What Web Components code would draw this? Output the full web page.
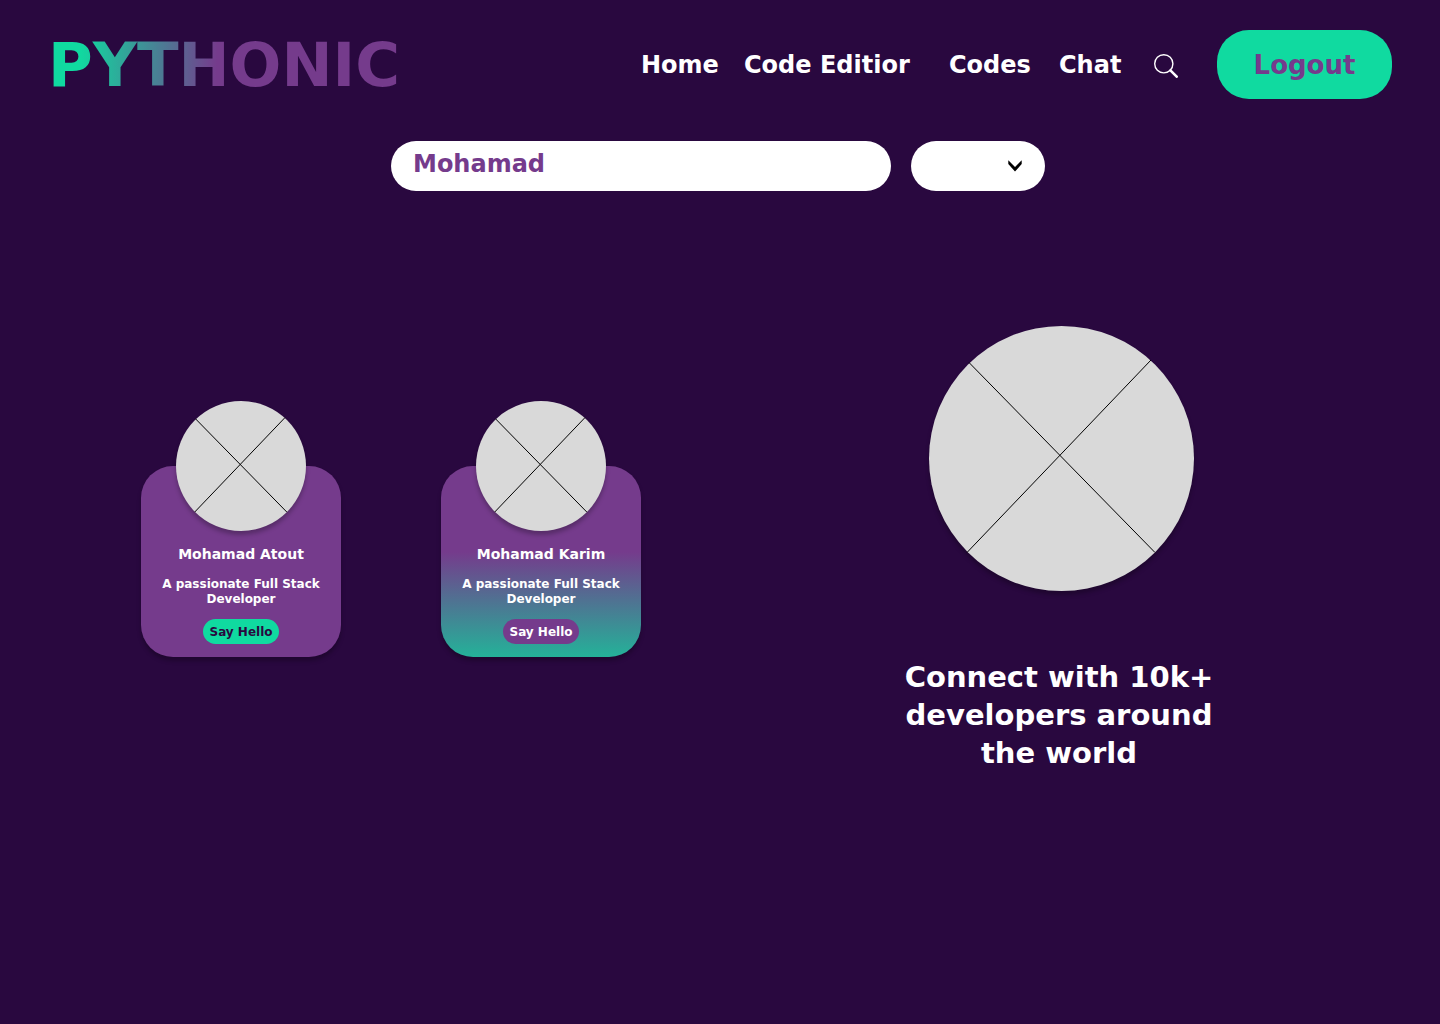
<!DOCTYPE html>
<html lang="en">
<head>
<meta charset="utf-8">
<meta name="viewport" content="width=device-width, initial-scale=1">
<title>Pythonic</title>
<style>
  :root {
    --bg: #29083f;
    --purple: #753b8c;
    --green: #10daa0;
    --grey: #d9d9d9;
    --shadow: 0 4px 4px rgba(0, 0, 0, .25);
  }
  body {
    margin: 0;
    min-height: 100vh;
    background: var(--bg);
    color: #fff;
    font-family: "DejaVu Sans", Verdana, sans-serif;
    font-weight: 700;
  }
</style>
</head>
<body>
<pythonic-page></pythonic-page>

<script>
const define = (name, html) => {
  const template = document.createElement('template');
  template.innerHTML = html;
  customElements.define(name, class extends HTMLElement {
    constructor() {
      super();
      this.attachShadow({ mode: 'open' }).append(template.content.cloneNode(true));
    }
  });
};

define('brand-logo', `
  <style>
    :host { display: block; font-size: 61px; line-height: 68px; }
    a {
      display: block;
      color: transparent;
      text-decoration: none;
      background: linear-gradient(92deg, var(--green) 9%, var(--purple) 48%);
      background-clip: text;
      -webkit-background-clip: text;
    }
  </style>
  <a href="#"><slot></slot></a>
`);

define('search-icon', `
  <style>:host { display: block; width: 24px; padding-top: 2px; } svg { display: block; }</style>
  <svg width="24" height="24" viewBox="0 0 24 24" fill="none" stroke="#fff" aria-hidden="true">
    <circle cx="9.8" cy="9.8" r="9.1" stroke-width="1.4"/>
    <path d="M16.4 16.4 L22.7 22.7" stroke-width="2.6" stroke-linecap="round"/>
  </svg>
`);

define('site-header', `
  <style>
    :host { display: block; }
    header {
      display: flex;
      justify-content: space-between;
      align-items: center;
      padding: 30px 48px 0;
    }
    nav {
      display: grid;
      grid-template-columns: 103px 205px 110px 95px 63px 175px;
      align-items: center;
      font-size: 24px;
      line-height: 30px;
    }
    nav a { color: #fff; text-decoration: none; white-space: nowrap; }
    button {
      height: 69px;
      border: 0;
      border-radius: 32px;
      background: var(--green);
      color: var(--purple);
      font: inherit;
      font-size: 26px;
    }
  </style>
  <header>
    <brand-logo>PYTHONIC</brand-logo>
    <nav aria-label="Main">
      <a href="#">Home</a>
      <a href="#">Code Editior</a>
      <a href="#">Codes</a>
      <a href="#">Chat</a>
      <a href="#" aria-label="Search"><search-icon></search-icon></a>
      <button type="button">Logout</button>
    </nav>
  </header>
`);

define('search-bar', `
  <style>
    :host { display: block; }
    form {
      display: flex;
      justify-content: center;
      gap: 20px;
      padding: 42px 24px 0 20px;
    }
    input, select {
      box-sizing: border-box;
      height: 50px;
      margin: 0;
      border: 0;
      border-radius: 25px;
      background: #fff;
      color: var(--purple);
      font: inherit;
      font-size: 24px;
    }
    input { flex: 0 1 500px; min-width: 0; padding: 0 22px 4px; }
    .filter { display: grid; grid-template-columns: 134px; align-items: center; }
    .filter > * { grid-area: 1 / 1; }
    select { appearance: none; width: 100%; padding: 0 40px 0 22px; }
    svg { justify-self: end; margin-right: 23px; pointer-events: none; }
  </style>
  <form>
    <input type="text" value="Mohamad" aria-label="Search developers">
    <div class="filter">
      <select aria-label="Filter"><option></option></select>
      <svg width="14" height="12" viewBox="0 0 14 12" aria-hidden="true">
        <path d="M0.3 0.3 L7 7 L13.7 0.3 V4 L7 11.6 L0.3 4 Z"/>
      </svg>
    </div>
  </form>
`);

define('user-avatar', `
  <style>
    :host {
      display: block;
      aspect-ratio: 1;
      border-radius: 50%;
      background: var(--grey);
      box-shadow: var(--shadow);
    }
    svg { display: block; width: 100%; height: 100%; }
    path { vector-effect: non-scaling-stroke; }
  </style>
  <svg viewBox="0 0 265 265" fill="none" stroke="#000" aria-hidden="true">
    <path d="M40 36.500 L226 226.500 M222 34 L38 226.500"/>
  </svg>
`);

define('developer-card', `
  <style>
    :host { display: block; width: 200px; padding-top: 65px; }
    article {
      display: flex;
      flex-direction: column;
      align-items: center;
      padding: 0 16px 13px;
      border-radius: 32px;
      background: var(--purple);
      box-shadow: var(--shadow);
      text-align: center;
    }
    :host([featured]) article {
      background: linear-gradient(var(--purple) 45%, #24b299);
    }
    user-avatar { width: 130px; margin-top: -65px; }
    h2 { margin: 14px 0; font-size: 14px; line-height: 18px; white-space: nowrap; }
    p { margin: 0 0 12px; font-size: 12px; line-height: 15px; }
    button {
      height: 25px;
      width: 76px;
      padding: 0;
      border: 0;
      border-radius: 13px;
      background: var(--green);
      color: var(--bg);
      font: inherit;
      font-size: 12px;
    }
    :host([featured]) button { background: var(--purple); color: #fff; }
  </style>
  <article>
    <user-avatar></user-avatar>
    <h2><slot name="name"></slot></h2>
    <p><slot></slot></p>
    <button type="button">Say Hello</button>
  </article>
`);

define('connect-banner', `
  <style>
    :host { display: block; width: 362px; }
    section { display: flex; flex-direction: column; align-items: center; gap: 67px; }
    user-avatar { width: 265px; }
    h1 {
      margin: 0;
      padding: 0 14px 0 10px;
      font-size: 29px;
      line-height: 38px;
      text-align: center;
    }
  </style>
  <section>
    <user-avatar></user-avatar>
    <h1><slot></slot></h1>
  </section>
`);

define('pythonic-page', `
  <style>
    :host { display: block; }
    main {
      display: flex;
      justify-content: space-between;
      align-items: flex-start;
      padding: 135px 198px 60px 141px;
    }
    .cards { display: flex; gap: 100px; padding-top: 75px; }
  </style>
  <site-header></site-header>
  <search-bar></search-bar>
  <main>
    <div class="cards">
      <developer-card>
        <span slot="name">Mohamad Atout</span>
        A passionate Full Stack Developer
      </developer-card>
      <developer-card featured>
        <span slot="name">Mohamad Karim</span>
        A passionate Full Stack Developer
      </developer-card>
    </div>
    <connect-banner>Connect with 10k+ developers around the world</connect-banner>
  </main>
`);
</script>
</body>
</html>
